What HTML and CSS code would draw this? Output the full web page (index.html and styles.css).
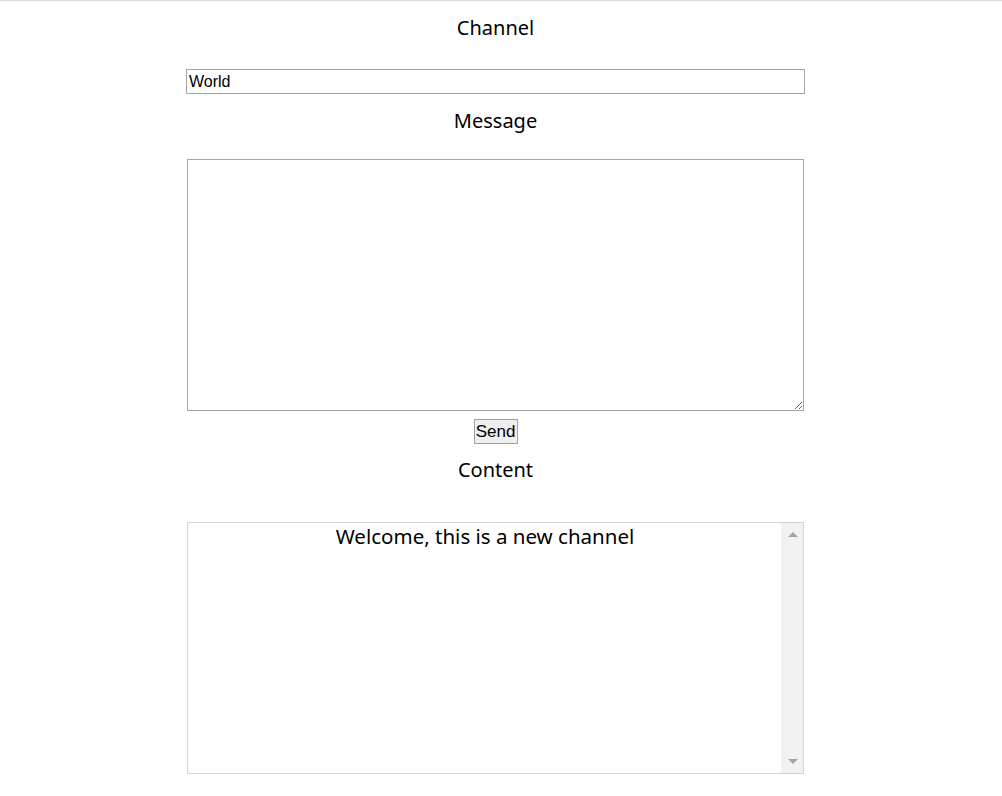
FILE: index.html
```html
<!DOCTYPE html>
<html>
<head>
<meta charset="utf-8">
<link rel="stylesheet" href="styles.css">
</head>
<body>
<div class="page">
  <div class="label label-channel">Channel</div>
  <input class="channel-input" type="text" value="World">
  <div class="label label-message">Message</div>
  <textarea class="message-box"></textarea>
  <div class="send-row"><button class="send-btn">Send</button></div>
  <div class="label label-content">Content</div>
  <div class="content-box">
    <div class="content-text">Welcome, this is a new channel</div>
    <div class="scrollbar">
      <span class="arrow arrow-up"></span>
      <span class="arrow arrow-down"></span>
    </div>
  </div>
</div>
</body>
</html>
```

FILE: styles.css
```css
html, body {
  margin: 0;
  padding: 0;
  background: #ffffff;
}
body {
  border-top: 1px solid #dadada;
  font-family: "Noto Sans", "Open Sans", sans-serif;
  color: #000;
}
.page {
  width: 619px;
  margin-left: 186px;
  display: flex;
  flex-direction: column;
}
.label {
  font-size: 20px;
  line-height: 26px;
  text-align: center;
}
.label-channel { margin-top: 14px; margin-bottom: 28px; }
.label-message { margin-top: 14px; margin-bottom: 25px; }
.label-content { margin-top: 13px; margin-bottom: 39px; }
.channel-input {
  box-sizing: border-box;
  width: 619px;
  height: 25px;
  margin: 0;
  padding: 0 2px;
  border: 1px solid #a6a6a6;
  font-family: "Liberation Sans", Arial, sans-serif;
  font-size: 16px;
  color: #000;
  outline: none;
}
.message-box {
  box-sizing: border-box;
  width: 617px;
  height: 252px;
  margin: 0 0 0 1px;
  padding: 2px;
  border: 1px solid #a6a6a6;
  display: block;
  outline: none;
}
.send-row {
  display: flex;
  justify-content: center;
  margin-top: 8px;
}
.send-btn {
  box-sizing: border-box;
  height: 25px;
  width: 44px;
  margin: 0;
  padding: 0;
  border: 1px solid #a0a0a0;
  background: #efefef;
  font-family: "Liberation Sans", Arial, sans-serif;
  font-size: 17px;
  line-height: 21px;
  color: #000;
  border-radius: 0;
}
.content-box {
  box-sizing: border-box;
  width: 617px;
  height: 252px;
  margin-left: 1px;
  border: 1px solid #d3d3d3;
  display: flex;
}
.content-text {
  flex: 1;
  font-size: 20.5px;
  line-height: 26px;
  text-align: center;
  padding-left: 1px;
}
.scrollbar {
  width: 21px;
  background: #f1f1f1;
  display: flex;
  flex-direction: column;
  justify-content: space-between;
  align-items: center;
  padding: 9px 0 9px 1px;
}
.arrow {
  width: 0;
  height: 0;
  border-left: 5px solid transparent;
  border-right: 5px solid transparent;
}
.arrow-up { border-bottom: 5px solid #a3a3a3; }
.arrow-down { border-top: 5px solid #a3a3a3; }
```
